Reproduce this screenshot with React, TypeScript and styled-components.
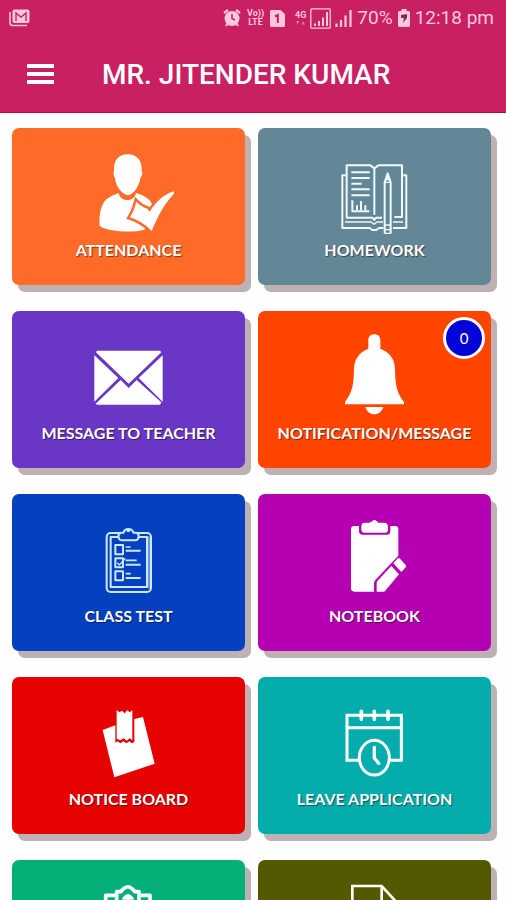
import React from "react";
import styled, { createGlobalStyle } from "styled-components";

const GlobalStyle = createGlobalStyle`
  *, *::before, *::after { box-sizing: border-box; }
  body { margin: 0; background: #fefefe; }
`;

const Screen = styled.div`
  display: flex;
  flex-direction: column;
  height: 100vh;
  font-family: Roboto, "Liberation Sans", sans-serif;
`;

const Header = styled.header`
  flex: none;
  color: #fff;
  background: #c91f63;
  border-bottom: 1px solid #a8104c;
`;

const StatusBar = styled.div`
  display: flex;
  align-items: center;
  height: 36px;
  padding: 0 12px 0 9px;
  color: #fbc8dd;
  font-size: 19px;
  line-height: 24px;
`;

const StatusGroup = styled.div<{ $gap: number; $before: string }>`
  display: flex;
  align-items: center;
  gap: ${(p) => p.$gap}px;
  margin-left: ${(p) => p.$before};
`;

const TinyText = styled.span`
  display: flex;
  flex-direction: column;
  align-items: center;
  font-size: 9px;
  font-weight: 700;
  line-height: 9px;
`;

const Toolbar = styled.div`
  display: flex;
  align-items: center;
  gap: 40px;
  height: 76px;
  padding: 0 18px;
`;

const MenuButton = styled.button`
  display: flex;
  align-items: center;
  justify-content: center;
  width: 44px;
  height: 44px;
  padding: 0;
  border: 0;
  background: none;
  color: inherit;
`;

const Title = styled.h1`
  margin: 0;
  padding-top: 2px;
  font-size: 28px;
  font-weight: 500;
  line-height: 36px;
  white-space: nowrap;
`;

const Grid = styled.main`
  flex: 1;
  min-height: 0;
  overflow-y: auto;
  scrollbar-width: none;
  display: grid;
  grid-template-columns: 1fr 1fr;
  grid-auto-rows: min-content;
  gap: 26px 13px;
  padding: 15px 15px 26px 12px;
`;

const Card = styled.button<{ $color: string }>`
  position: relative;
  display: flex;
  flex-direction: column;
  align-items: center;
  gap: 4px;
  padding: 22px 0 23px;
  border: 0;
  border-radius: 7px;
  background: ${(p) => p.$color};
  box-shadow: 6px 7px 0 #bdb1b3;
  color: #fff;
  cursor: pointer;
`;

const Label = styled.span`
  font-family: Lato, "Open Sans", sans-serif;
  font-size: 16px;
  font-weight: 700;
  line-height: 24px;
  white-space: nowrap;
  text-shadow: 1px 1px 1px rgba(0, 0, 0, 0.5);
`;

const Badge = styled.span`
  position: absolute;
  top: 6px;
  right: 6px;
  display: flex;
  align-items: center;
  justify-content: center;
  width: 42px;
  height: 42px;
  border: 3px solid #fff;
  border-radius: 50%;
  background: #0404d8;
  font-family: Lato, "Open Sans", sans-serif;
  font-size: 15px;
`;

const Glyph = styled.svg`
  display: block;
  width: 91px;
  height: 84px;
`;

type ArtProps = { x: number; y: number; children: React.ReactNode };

const Art = ({ x, y, children }: ArtProps) => (
  <Glyph viewBox={`${x} ${y} 273 252`} fill="none" stroke="none" aria-hidden="true">
    {children}
  </Glyph>
);

const Attendance = () => (
  <Art x={249} y={90}>
    <g fill="#fff">
      <path d="M356 219C359 237 374 241 386 240C398 239 405 231 408 219C426 224 447 233 456 252L460 262L448 285L434 329C400 338 330 338 299 318C296 283 303 252 320 237C333 227 345 224 356 219Z" />
      <path d="M383 103C356 103 340 121 342 152C339 158 341 168 345 174C347 195 361 220 383 226C405 221 418 195 421 174C427 167 429 157 425 152C427 121 410 103 383 103Z" />
      <path
        d="M409 245C420 256 432 263 442 266L449 275C466 250 488 219 533 211C500 239 475 284 455 333C435 313 414 300 390 292C400 276 404 263 409 245Z"
        stroke="#fe6b28"
        strokeWidth="15"
        paintOrder="stroke"
      />
    </g>
  </Art>
);

const Homework = () => (
  <Art x={228} y={90}>
    <g stroke="#effafc" strokeWidth="6" strokeLinejoin="round">
      <path d="M387 293H369L364 300L358 293H281V136H352L364 145L376 136H447V291H424" />
      <path d="M364 145V284" />
      <path d="M278 166H268V324H350L358 330H370L378 324H391M450 166H460V324H420" />
      <path d="M276 306H354L363 313L372 306H390M420 306H450" strokeWidth="4" />
      <path d="M295 157H350M295 174H350M295 191H326M295 208H350M295 226H350" />
      <path d="M298 241V274H349M312 270V256M324 270V243M337 270V256" />
      <path d="M395 187L404 160L413 187V338L410 341H398L395 338Z" />
      <path d="M395 187H413M395 315H413M395 329H413" strokeWidth="4" />
    </g>
    <path d="M398 181L404 160L410 181Z" fill="#effafc" />
  </Art>
);

const Envelope = () => (
  <Art x={249} y={84}>
    <g fill="#fff">
      <path d="M291 137H480L484 142L386 236L288 142Z" />
      <path d="M283 151L355 219L283 290Z" />
      <path d="M488 151V290L416 219Z" />
      <path d="M362 225L386 249L410 225L484 292L480 299H291L287 296Z" />
    </g>
  </Art>
);

const Bell = () => (
  <Art x={228} y={84}>
    <g fill="#fff">
      <path d="M346 131V106C346 95 353 88 364 88C375 88 382 95 382 106V131C410 141 425 163 426 190C427 242 431 262 453 291V298H276V291C298 262 302 242 303 190C304 163 319 141 346 131Z" />
      <path d="M337 306H391C387 320 376 328 364 328C352 328 341 320 337 306Z" />
    </g>
  </Art>
);

const ClassTest = () => (
  <Art x={249} y={84}>
    <g stroke="#cbe9fb" strokeWidth="6" strokeLinejoin="round">
      <rect x="320" y="135" width="133" height="177" rx="12" />
      <path d="M354 147H332V297H441V147H416" />
      <path d="M447 145V302" strokeWidth="5" opacity="0.6" />
      <path d="M363 134H371C373 119 397 119 400 134H409C420 137 417 157 406 157H365C353 156 352 137 363 134Z" fill="#0540c1" />
      <path d="M380 129H390" />
      <path d="M346 171H369V199H346ZM346 211H369V238H346ZM346 250H369V277H346Z" />
      <path d="M352 224L358 231L376 211" strokeWidth="4" />
      <path d="M377 177H392M377 217H410M377 257H392" strokeWidth="5" />
      <path d="M377 188H422M377 230H422M377 270H422" />
    </g>
  </Art>
);

const Notebook = () => (
  <Art x={228} y={84}>
    <g fill="#fff">
      <path d="M304 114H318V129Q318 140 329 140H402Q412 140 412 129V114H426Q436 114 436 124V203L367 276Q363 281 363 288V311H304Q294 311 294 301V124Q294 114 304 114Z" />
      <path d="M334 104H350C353 101 356 101 358 99Q364 93 371 99L376 104H394Q405 104 405 118V125Q405 134 396 134H335Q325 134 325 125V116Q325 104 334 104Z" />
      <path d="M415 234L438 259L397 308Q395 311 391 311H371V286Q371 281 375 277Z" />
      <path d="M421 226L433 212Q437 208 441 212L458 231Q461 235 458 238L445 252Z" />
    </g>
  </Art>
);

const NoticeBoard = () => (
  <Art x={249} y={81}>
    <g fill="#fff">
      <path d="M308 174L346 160V212L353 208L361 214L370 208L379 214L388 208L395 214L403 210V141L429 135L464 275L343 316Z" />
      <path d="M350 114L358 121L366 116L374 124L382 115L389 121L397 115V205L389 199L380 206L371 199L361 205L350 200Z" />
    </g>
  </Art>
);

const Leave = () => (
  <Art x={228} y={81}>
    <g stroke="#fff" strokeWidth="9">
      <path d="M316 265H282V130H445V265H412M281 167H446" />
      <path d="M325 118V142M364 118V142M405 118V142" strokeWidth="11" strokeLinecap="round" />
      <ellipse cx="364" cy="257" rx="45" ry="52" />
      <path d="M364 226V258L377 274" strokeWidth="10" strokeLinecap="round" />
    </g>
  </Art>
);

const Clipboard = () => (
  <Art x={249} y={630}>
    <g stroke="#fff" strokeWidth="11" strokeLinejoin="round">
      <path d="M345 670H317V850H450V670H422" />
      <path d="M350 700V659H363C367 652 372 650 374 648C380 643 388 643 393 648C395 650 400 652 404 659H417V700Z" />
      <path d="M342 735H425M342 770H425M342 805H400" />
    </g>
    <path d="M366 683Q369 669 384 666Q399 669 402 683Z" fill="#fff" />
  </Art>
);

const Document = () => (
  <Art x={228} y={630}>
    <g stroke="#fff" strokeWidth="8">
      <path d="M298 642H386L432 692V850H298Z" />
      <path d="M386 642V692H432M320 730H410M320 765H410M320 800H380" />
    </g>
  </Art>
);

const tiles = [
  { label: "ATTENDANCE", color: "#fe6b28", Icon: Attendance },
  { label: "HOMEWORK", color: "#648797", Icon: Homework },
  { label: "MESSAGE TO TEACHER", color: "#6936c5", Icon: Envelope },
  { label: "NOTIFICATION/MESSAGE", color: "#ff4500", Icon: Bell, count: 0 },
  { label: "CLASS TEST", color: "#0540c1", Icon: ClassTest },
  { label: "NOTEBOOK", color: "#b501b2", Icon: Notebook },
  { label: "NOTICE BOARD", color: "#e70202", Icon: NoticeBoard },
  { label: "LEAVE APPLICATION", color: "#04adab", Icon: Leave },
  { label: "", color: "#04b078", Icon: Clipboard },
  { label: "", color: "#545800", Icon: Document },
];

const MailIcon = () => (
  <svg width="21" height="18" viewBox="0 0 21 18" fill="none" aria-hidden="true">
    <path d="M1 3V14Q1 16.500 3.500 16.500H18" stroke="currentColor" strokeWidth="1.500" />
    <rect x="3.500" y="0.500" width="17" height="13.500" rx="2" fill="currentColor" />
    <path d="M7 12V4L12 8L17 4V12" stroke="#c91f63" strokeWidth="1.400" />
  </svg>
);

const AlarmIcon = () => (
  <svg width="18" height="18" viewBox="0 0 18 18" fill="none" stroke="currentColor" aria-hidden="true">
    <circle cx="9" cy="9.500" r="7.500" fill="currentColor" stroke="none" />
    <path d="M1 4L5 1M17 4L13 1M3 17L5 14M15 17L13 14" strokeWidth="2.200" />
    <path d="M9 5V9.500L12 11" stroke="#b32a62" strokeWidth="1.500" />
  </svg>
);

const SimIcon = () => (
  <svg width="15" height="17" viewBox="0 0 15 17" fill="none" aria-hidden="true">
    <path d="M1.500 0H10.500L15 4V15.500Q15 17 13.500 17H1.500Q0 17 0 15.500V1.500Q0 0 1.500 0Z" fill="currentColor" />
    <path d="M5 6.500L7.800 5V13" stroke="#c91f63" strokeWidth="2" />
  </svg>
);

const ArrowsIcon = () => (
  <svg width="9" height="5" viewBox="0 0 9 5" fill="currentColor" opacity="0.5" aria-hidden="true">
    <path d="M0 1H3.500L1.800 4.500ZM5.500 4.500H9L7.200 1Z" />
  </svg>
);

const BoxedSignalIcon = () => (
  <svg width="21" height="21" viewBox="0 0 21 21" fill="none" stroke="currentColor" aria-hidden="true">
    <rect x="0.800" y="0.800" width="19.400" height="19.400" rx="1" strokeWidth="1.300" />
    <path d="M5 18V15.500M9 18V13M13 18V9.500M17 18V4" strokeWidth="2" />
  </svg>
);

const SignalIcon = () => (
  <svg width="17" height="18" viewBox="0 0 17 18" fill="none" stroke="currentColor" aria-hidden="true">
    <path d="M1.500 18V14.500M6 18V11M10.500 18V6.500M15.500 18V1" strokeWidth="2.200" />
  </svg>
);

const BatteryIcon = () => (
  <svg width="12" height="18" viewBox="0 0 12 18" aria-hidden="true">
    <path d="M3.500 0H8.500V2H10.500Q12 2 12 3.500V16.500Q12 18 10.500 18H1.500Q0 18 0 16.500V3.500Q0 2 1.500 2H3.500Z" fill="currentColor" />
    <path d="M3 6L9 5V9L5 14L6 9H3Z" fill="#76304f" />
  </svg>
);

export default function App() {
  return (
    <Screen>
      <GlobalStyle />
      <Header>
        <StatusBar>
          <MailIcon />
          <StatusGroup $gap={6} $before="auto">
            <AlarmIcon />
            <TinyText>
              <span>Vo))</span>
              <span>LTE</span>
            </TinyText>
            <SimIcon />
          </StatusGroup>
          <StatusGroup $gap={4} $before="10px">
            <TinyText>
              <span>4G</span>
              <ArrowsIcon />
            </TinyText>
            <BoxedSignalIcon />
            <SignalIcon />
          </StatusGroup>
          <StatusGroup $gap={5} $before="5px">
            <span>70%</span>
            <BatteryIcon />
            <span>12:18 pm</span>
          </StatusGroup>
        </StatusBar>
        <Toolbar>
          <MenuButton aria-label="Open menu">
            <svg width="27" height="20" viewBox="0 0 27 20" fill="currentColor" aria-hidden="true">
              <path d="M0 0H27V4H0ZM0 8H27V12H0ZM0 16H27V20H0Z" />
            </svg>
          </MenuButton>
          <Title>MR. JITENDER KUMAR</Title>
        </Toolbar>
      </Header>
      <Grid>
        {tiles.map(({ label, color, Icon, count }) => (
          <Card key={color} $color={color} type="button">
            <Icon />
            <Label>{label || "\u00a0"}</Label>
            {count !== undefined && <Badge>{count}</Badge>}
          </Card>
        ))}
      </Grid>
    </Screen>
  );
}
